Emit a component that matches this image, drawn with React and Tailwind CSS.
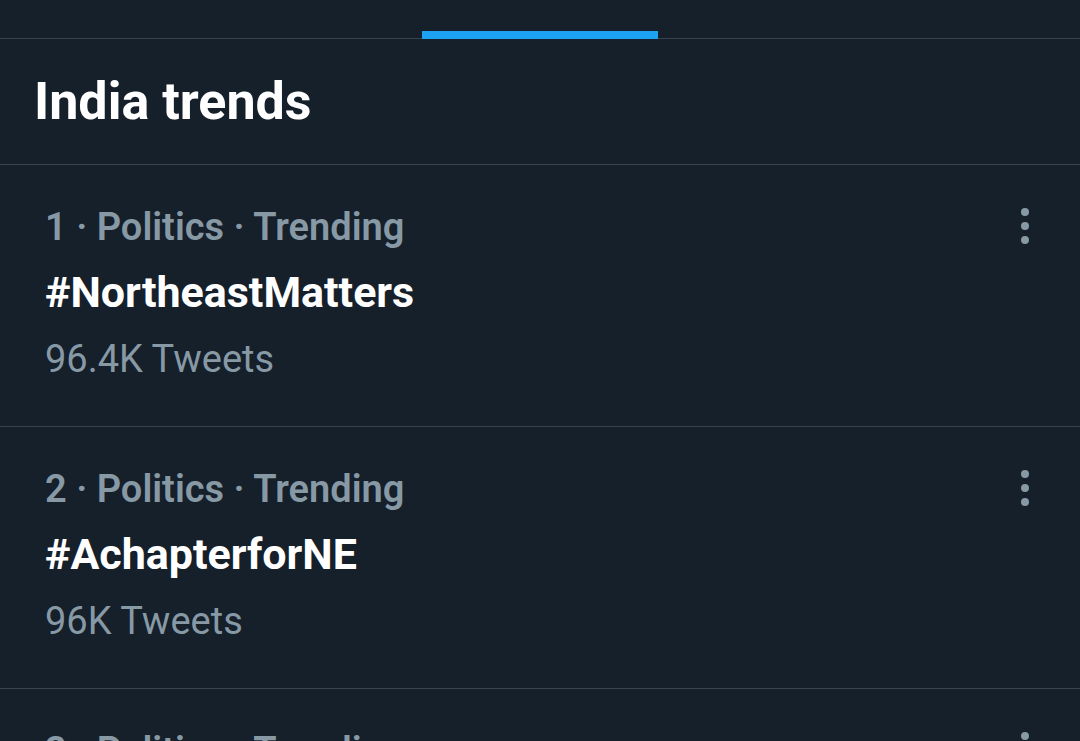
const trends = [
  { rank: 1, category: "Politics", tag: "#NortheastMatters", count: "96.4K Tweets" },
  { rank: 2, category: "Politics", tag: "#AchapterforNE", count: "96K Tweets" },
  { rank: 3, category: "Politics", tag: "#NortheastIndia", count: "41.2K Tweets" },
];

function MoreDots() {
  return (
    <div className="flex flex-col items-center gap-[6px] mt-[43px] mr-[51px]">
      <span className="w-[8px] h-[8px] rounded-full bg-[#8899a6]" />
      <span className="w-[8px] h-[8px] rounded-full bg-[#8899a6]" />
      <span className="w-[8px] h-[8px] rounded-full bg-[#8899a6]" />
    </div>
  );
}

function TrendRow({ trend }) {
  return (
    <div className="flex justify-between border-b border-[#38444d]">
      <div className="pl-[45px] pt-[29px] pb-[32px]">
        <div className="text-[38px] leading-[66px] font-semibold text-[#8899a6]">
          {trend.rank} · {trend.category} · Trending
        </div>
        <div className="text-[43px] leading-[64px] font-bold text-white">{trend.tag}</div>
        <div className="text-[38px] leading-[70px] text-[#8899a6]">{trend.count}</div>
      </div>
      <MoreDots />
    </div>
  );
}

export default function App() {
  return (
    <div
      className="w-[1080px] h-[741px] overflow-hidden bg-[#15202b]"
      style={{ fontFamily: "Roboto, 'Noto Sans', sans-serif" }}
    >
      <div className="h-[39px] flex items-end justify-center border-b border-[#38444d]">
        <div className="w-[236px] h-[8px] bg-[#1da1f2] mb-[-1px]" />
      </div>
      <div className="h-[126px] border-b border-[#38444d] pl-[34px]">
        <h1 className="text-[52px] leading-[125px] font-bold text-white">India trends</h1>
      </div>
      {trends.map((t) => (
        <TrendRow key={t.rank} trend={t} />
      ))}
    </div>
  );
}
